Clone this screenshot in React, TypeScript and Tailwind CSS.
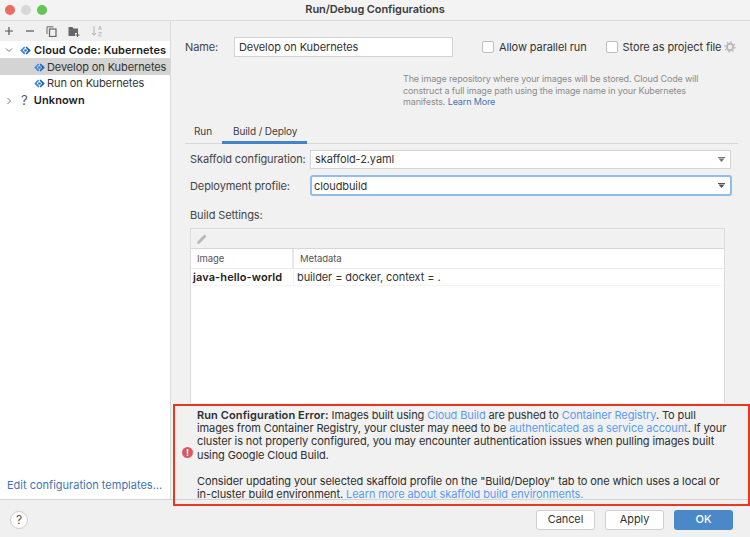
import React from "react";

const CloudIcon = () => (
  <svg width="11" height="9" viewBox="0 0 11 9" className="shrink-0">
    <path d="M4.2 0.5 L0.2 4.5 L4.2 8.5 L5.4 7.3 L4 5.6 L2.6 4.5 L5.2 1.6 Z" fill="#3d8ae6" />
    <path d="M6.6 0.5 L10.8 4.5 L6.6 8.5 L5.6 7.4 L8.2 4.5 L5.6 1.6 Z" fill="#1f5fb4" />
    <rect x="4.2" y="3.4" width="2.6" height="2.2" fill="#2f78d6" />
  </svg>
);

const Chevron = ({ open }: { open?: boolean }) => (
  <svg width="8" height="8" viewBox="0 0 8 8" className="shrink-0">
    <path d={open ? "M1 2.5 L4 5.5 L7 2.5" : "M2.5 1 L5.5 4 L2.5 7"} fill="none" stroke="#777" strokeWidth="1" />
  </svg>
);

const Caret = ({ dark }: { dark?: boolean }) => (
  <svg width="8" height="6" viewBox="0 0 8 6" className="shrink-0">
    <rect x="0" y="0" width="7" height="1" fill={dark ? "#555" : "#777"} />
    <path d="M0.5 1.5 H6.5 L3.5 5 Z" fill={dark ? "#555" : "#777"} />
  </svg>
);

const A = ({ children }: { children: React.ReactNode }) => <span className="text-[#5b9bef]">{children}</span>;

const Checkbox = ({ label }: { label: string }) => (
  <div className="flex items-center gap-[5px]">
    <div className="w-[12px] h-[12px] bg-white border border-[#bdbdbd] rounded-[2px]" />
    <span>{label}</span>
  </div>
);

const Button = ({ children, primary }: { children: React.ReactNode; primary?: boolean }) => (
  <div
    className={
      primary
        ? "w-[59px] h-[20px] rounded-[3px] bg-[#4a88c7] text-white flex items-center justify-center font-medium"
        : "w-[59px] h-[20px] rounded-[3px] bg-white border border-[#cfcfcf] flex items-center justify-center"
    }
  >
    {children}
  </div>
);

export default function App() {
  return (
    <div className="relative w-[750px] h-[537px] overflow-hidden bg-[#f0f0f0] text-[#333] text-[11px] leading-[13px] tracking-[-0.1px] font-['Inter',sans-serif]">
      {/* Title bar */}
      <div className="relative h-[21px] pb-[2px] border-b border-[#dcdcdc] bg-[#f3f3f3] flex items-center justify-center font-semibold text-[#3c3c3c]">
        <div className="absolute left-[5px] top-[5px] flex gap-[6px]">
          <div className="w-[10px] h-[10px] rounded-full bg-[#ee6a5f]" />
          <div className="w-[10px] h-[10px] rounded-full bg-[#d8d8d8]" />
          <div className="w-[10px] h-[10px] rounded-full bg-[#62c554]" />
        </div>
        Run/Debug Configurations
      </div>

      {/* Body */}
      <div className="flex h-[479px] border-b border-[#d4d4d4]">
        {/* Sidebar */}
        <div className="w-[171px] shrink-0 flex flex-col border-r border-[#dadada]">
          <div className="h-[20px] shrink-0 flex items-center pl-[4px] gap-[11px] bg-[#f0f0f0]">
            <svg width="10" height="10" viewBox="0 0 10 10"><path d="M5 1 V9 M1 5 H9" stroke="#555" strokeWidth="1.2" /></svg>
            <svg width="10" height="10" viewBox="0 0 10 10"><path d="M1 5 H9" stroke="#555" strokeWidth="1.2" /></svg>
            <svg width="11" height="11" viewBox="0 0 11 11" fill="none" stroke="#666"><rect x="3.5" y="3" width="6.5" height="7.5" strokeWidth="1.2" /><path d="M7.5 0.8 H1 V8" /></svg>
            <svg width="12" height="11" viewBox="0 0 12 11"><path d="M0.5 1 H4.5 L5.5 2.5 H10 V7 H7 V10 H0.5 Z" fill="#666" /><path d="M9.5 7 V11 M7.5 9 H11.5" stroke="#555" /></svg>
            <svg width="12" height="12" viewBox="0 0 12 12" fill="none" stroke="#b5b5b5"><path d="M3 1 V10 M1 8 L3 10.5 L5 8" /><path d="M7.5 5 L9 1 L10.5 5 M8 3.8 H10" strokeWidth="0.8" /><path d="M7.5 7.5 H10.5 L7.5 11 H10.5" strokeWidth="0.8" /></svg>
          </div>
          <div className="flex-1 bg-white flex flex-col">
            <div className="h-[17px] pt-[1px] flex items-center pl-[5px] font-semibold tracking-[0.1px] text-[#222]">
              <Chevron open />
              <span className="ml-[7px] mr-[3px]"><CloudIcon /></span>
              <span>Cloud Code: Kubernetes</span>
            </div>
            <div className="h-[17px] pt-[1px] flex items-center pl-[34px] gap-[2px] bg-[#d4d4d4]">
              <CloudIcon />
              <span>Develop on Kubernetes</span>
            </div>
            <div className="h-[17px] flex items-center pl-[34px] gap-[2px]">
              <CloudIcon />
              <span>Run on Kubernetes</span>
            </div>
            <div className="h-[17px] flex items-center pl-[5px] font-semibold tracking-[0.1px] text-[#222]">
              <Chevron />
              <span className="ml-[8px] mr-[6px] font-normal text-[13px] text-[#555]">?</span>
              <span>Unknown</span>
            </div>
            <div className="mt-auto pl-[7px] pb-[7px] tracking-normal text-[#3f75b5]">Edit configuration templates...</div>
          </div>
        </div>

        {/* Main panel */}
        <div className="flex-1 flex flex-col min-w-0 bg-[#f1f1f1]">
          {/* Name row */}
          <div className="flex items-center h-[20px] mt-[16px] pl-[14px]">
            <span className="w-[49px] text-[#444]">Name:</span>
            <div className="w-[219px] h-[20px] bg-white border border-[#d4d4d4] flex items-center pl-[4px]">Develop on Kubernetes</div>
            <div className="ml-[29px]"><Checkbox label="Allow parallel run" /></div>
            <div className="ml-[19px]"><Checkbox label="Store as project file" /></div>
            <svg className="ml-[3px]" width="12" height="12" viewBox="0 0 12 12">
              <circle cx="6" cy="6" r="3.2" fill="none" stroke="#b9b9b9" strokeWidth="2" />
              <circle cx="6" cy="6" r="5" fill="none" stroke="#b9b9b9" strokeWidth="1.4" strokeDasharray="1.6 2.3" />
            </svg>
          </div>

          {/* Help text */}
          <div className="mt-[16px] ml-[232px] h-[38px] text-[9px] leading-[11.5px] tracking-[-0.14px] text-[#8c8c8c] whitespace-nowrap">
            The image repository where your images will be stored. Cloud Code will<br />
            construct a full image path using the image name in your Kubernetes<br />
            manifests. <span className="text-[#3f75b5]">Learn More</span>
          </div>

          {/* Tabs */}
          <div className="mt-[13px] ml-[14px] mr-[12px] h-[20px] flex border-b border-[#d8d8d8] text-[10px] text-[#3c3c3c]">
            <div className="w-[37px] pl-[9px] pt-[1px]">Run</div>
            <div className="w-[85px] h-[20px] pl-[11px] pt-[1px] border-b-[3px] border-[#4083c9]">Build / Deploy</div>
          </div>

          {/* Form */}
          <div className="flex items-center h-[19px] mt-[6px] pl-[19px] pr-[19px]">
            <span className="w-[120px] shrink-0 text-[#444] whitespace-nowrap">Skaffold configuration:</span>
            <div className="flex-1 h-[19px] bg-white border border-[#d4d4d4] flex items-center justify-between pl-[4px] pr-[4px]">
              <span>skaffold-2.yaml</span>
              <Caret />
            </div>
          </div>
          <div className="flex items-center h-[21px] mt-[6px] pl-[19px] pr-[18px]">
            <span className="w-[120px] shrink-0 pt-[1px] text-[#444]">Deployment profile:</span>
            <div className="flex-1 h-[21px] pt-[1px] bg-white border-2 border-[#90bdef] rounded-[3px] flex items-center justify-between pl-[2px] pr-[4px]">
              <span>cloudbuild</span>
              <Caret dark />
            </div>
          </div>

          <div className="mt-[13px] pl-[19px] text-[#444]">Build Settings:</div>

          {/* Table */}
          <div className="mt-[6px] ml-[19px] mr-[25px] flex-1 flex flex-col border border-[#dcdcdc] border-b-0 min-h-0">
            <div className="h-[20px] shrink-0 border-b border-[#d6d6d6] flex items-center pl-[5px]">
              <svg width="12" height="12" viewBox="0 0 12 12"><path d="M1 11 L1.6 8.4 L8.4 1.6 L10.4 3.6 L3.6 10.4 Z" fill="#b8b8b8" /></svg>
            </div>
            <div className="flex-1 bg-white flex flex-col text-[#333]">
              <div className="h-[20px] flex items-center border-b border-[#ececec] text-[9.5px] text-[#555]">
                <div className="w-[103px] h-full pl-[6px] flex items-center border-r-2 border-[#e8e8e8]">Image</div>
                <div className="pl-[6px]">Metadata</div>
              </div>
              <div className="h-[17px] flex items-center border-b border-[#f4f4f4]">
                <div className="w-[103px] h-full pl-[2px] flex items-center font-semibold tracking-[0.1px] border-r border-[#f2f2f2] text-[#222]">java-hello-world</div>
                <div className="pl-[3px]">builder = docker, context = .</div>
              </div>
            </div>
          </div>

          {/* Error */}
          <div className="h-[96px] shrink-0 flex items-start">
            <div className="w-[26px] h-full shrink-0 flex items-center justify-end pr-[4px] pt-[3px]">
              <div className="w-[11px] h-[11px] rounded-full bg-[#db5860] text-white text-[9px] leading-[11px] font-bold text-center">!</div>
            </div>
            <div className="whitespace-nowrap pt-[6px] leading-[13.2px] text-[#2e2e2e]">
              <b className="font-semibold tracking-[0.1px]">Run Configuration Error:</b> Images built using <A>Cloud Build</A> are pushed to <A>Container Registry</A>. To pull<br />
              images from Container Registry, your cluster may need to be <A>authenticated as a service account</A>. If your<br />
              cluster is not properly configured, you may encounter authentication issues when pulling images built<br />
              using Google Cloud Build.<br />
              <br />
              Consider updating your selected skaffold profile on the "Build/Deploy" tab to one which uses a local or<br />
              in-cluster build environment. <A>Learn more about skaffold build environments.</A>
            </div>
          </div>
        </div>
      </div>

      {/* Footer */}
      <div className="h-[36px] pt-[3px] flex items-center justify-between pl-[10px] pr-[17px]">
        <div className="w-[18px] h-[18px] rounded-full bg-white border border-[#cfcfcf] flex items-center justify-center text-[12px] text-[#555]">?</div>
        <div className="flex gap-[10px] text-[#333]">
          <Button>Cancel</Button>
          <Button>Apply</Button>
          <Button primary>OK</Button>
        </div>
      </div>

      {/* Red annotation frame */}
      <div className="absolute left-[173px] top-[404px] w-[577px] h-[102px] border-2 border-[#e8391f] pointer-events-none" />
    </div>
  );
}
